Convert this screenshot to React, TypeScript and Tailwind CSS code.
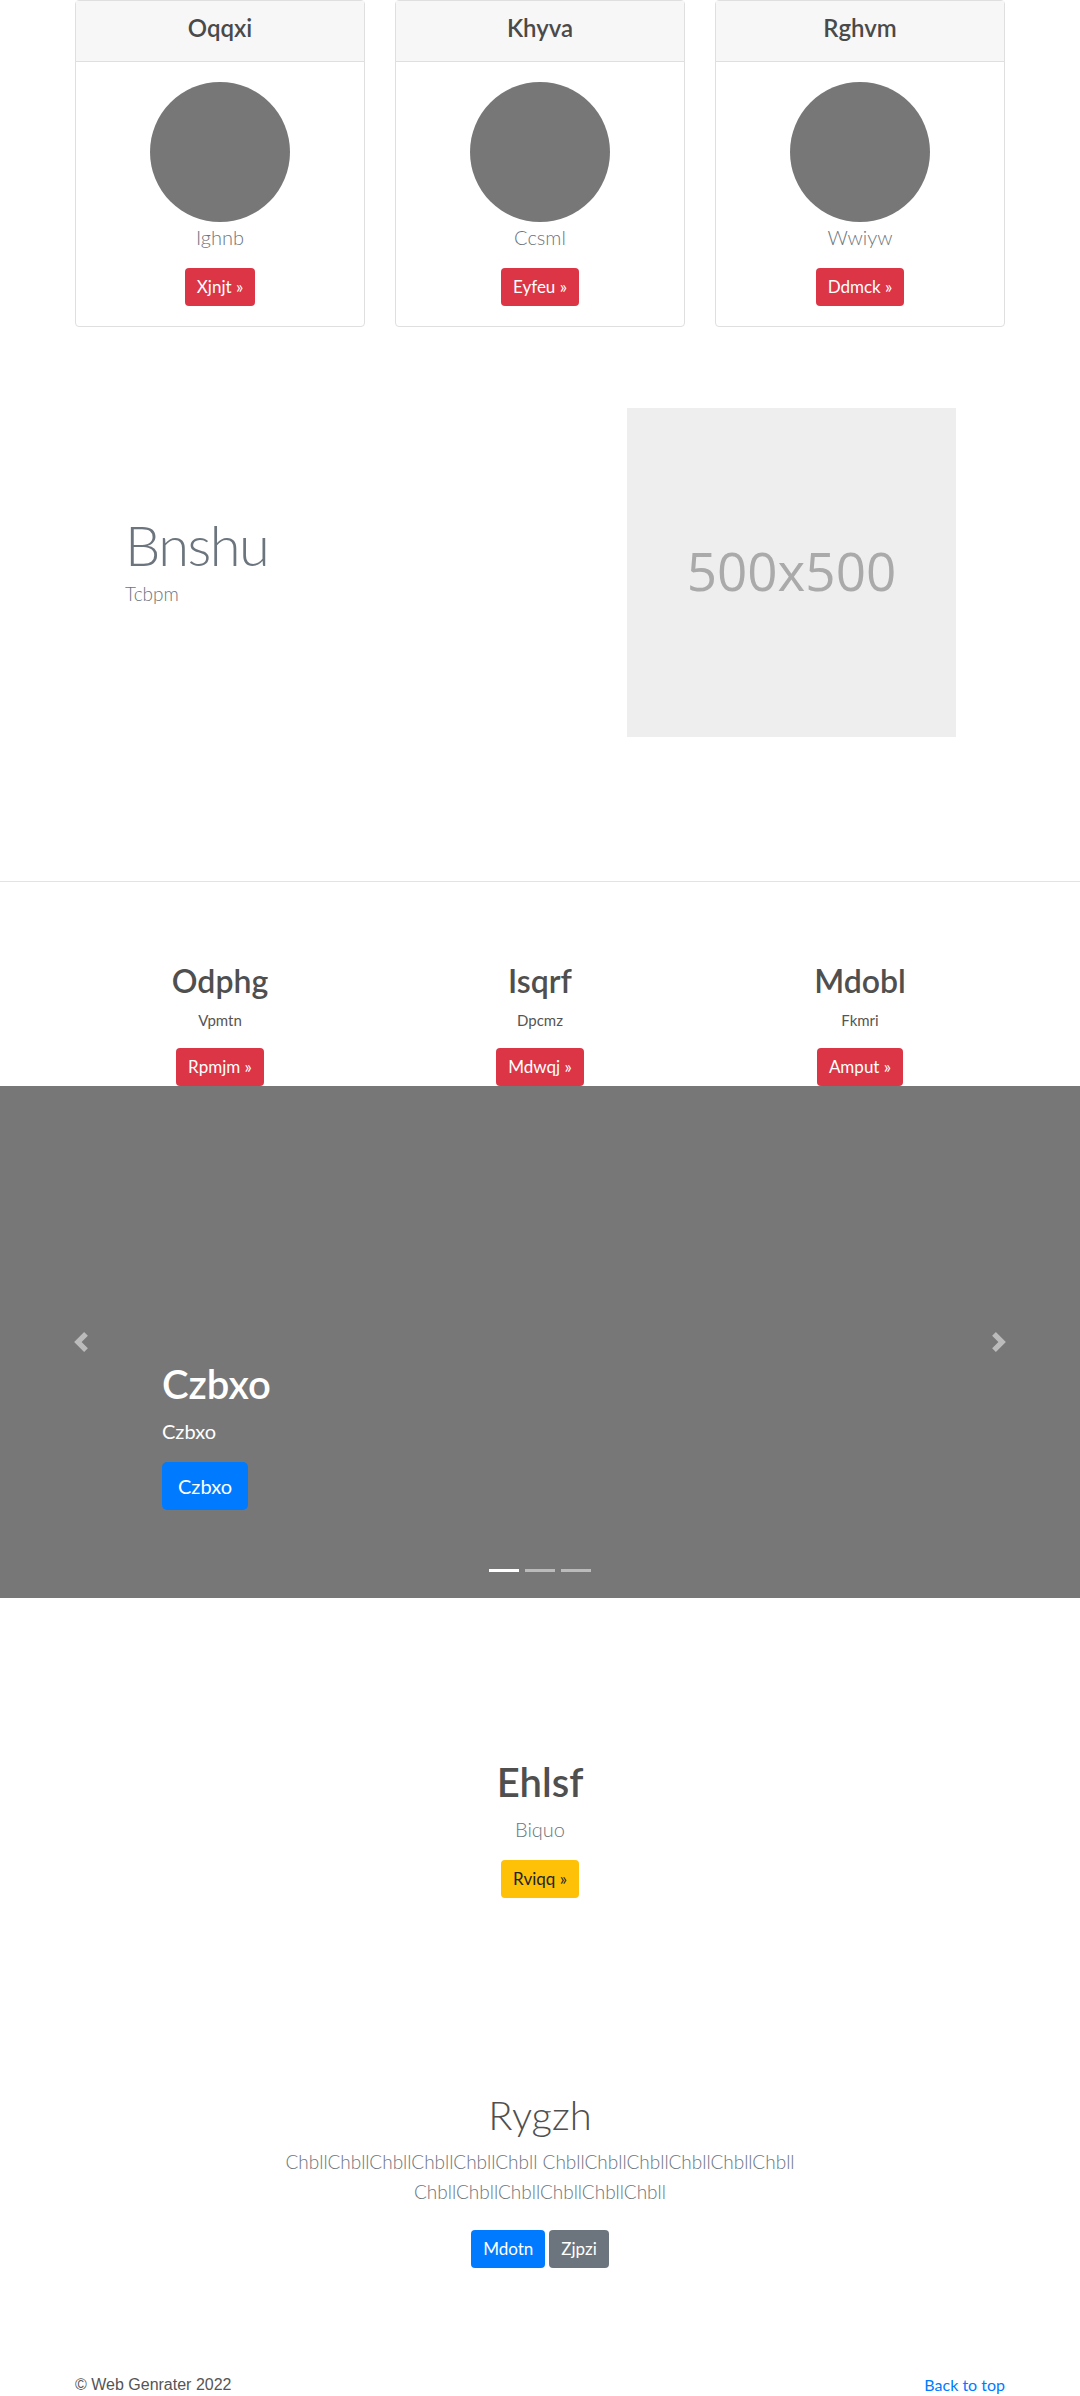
import React from "react";

const font = { fontFamily: '"Lato", "Noto Sans", sans-serif' };

const team = [
  { title: "Oqqxi", name: "Ighnb", cta: "Xjnjt »" },
  { title: "Khyva", name: "Ccsml", cta: "Eyfeu »" },
  { title: "Rghvm", name: "Wwiyw", cta: "Ddmck »" },
];

const features = [
  { title: "Odphg", text: "Vpmtn", cta: "Rpmjm »" },
  { title: "Isqrf", text: "Dpcmz", cta: "Mdwqj »" },
  { title: "Mdobl", text: "Fkmri", cta: "Amput »" },
];

function Chevron({ dir }: { dir: "prev" | "next" }) {
  const d =
    dir === "prev"
      ? "M5.25 0l-4 4 4 4 1.5-1.5L4.25 4l2.5-2.5L5.25 0z"
      : "M2.75 0l-1.5 1.5L3.75 4l-2.5 2.5L2.75 8l4-4-4-4z";
  return (
    <svg width="20" height="20" viewBox="0 0 8 8" className="opacity-50">
      <path d={d} fill="#fff" />
    </svg>
  );
}

export default function App() {
  return (
    <div className="bg-white text-[#212529]" style={font}>
      {/* team cards */}
      <section className="mx-auto w-[960px] px-[15px]">
        <div className="grid grid-cols-3 gap-[30px]">
          {team.map((t) => (
            <div key={t.title} className="rounded border border-[#dfdfdf] bg-white text-center">
              <div className="border-b border-[#dfdfdf] bg-[#f7f7f7] px-5 pt-3 pb-[11px]">
                <h4 className="mb-2 text-[24px] leading-[29px] font-semibold text-[#4a4a4a]">{t.title}</h4>
              </div>
              <div className="flex flex-col items-center p-5">
                <div className="h-[140px] w-[140px] rounded-full bg-[#777]" />
                <p className="mb-4 text-[20px] leading-[30px] font-light text-[#6c757d]">{t.name}</p>
                <button className="h-[38px] rounded bg-[#dc3545] px-3 text-[17px] text-white">{t.cta}</button>
              </div>
            </div>
          ))}
        </div>
      </section>

      {/* featurette */}
      <section className="mx-auto flex w-[960px] items-center px-[15px] pt-[81px] pb-[144px]">
        <div className="flex-1 pb-[26px] pl-[50px]">
          <h1 className="text-[56px] leading-[67px] font-light tracking-[-1.5px] text-[#6c757d]">Bnshu</h1>
          <p className="mt-[2px] text-[19px] leading-[28px] font-light text-[#6c757d]">Tcbpm</p>
        </div>
        <div className="mr-[49px] flex h-[329px] w-[329px] items-center justify-center bg-[#eeeeee]">
          <span className="pb-[4px] text-[53px] text-[#aaaaaa]" style={{ fontFamily: '"Open Sans", sans-serif' }}>
            500x500
          </span>
        </div>
      </section>

      <hr className="border-0 border-t border-[#e3e3e3]" />

      {/* three columns */}
      <section className="mx-auto w-[960px] px-[15px] pt-20">
        <div className="grid grid-cols-3 gap-[30px] text-center">
          {features.map((f) => (
            <div key={f.title} className="flex flex-col items-center">
              <h2 className="mb-2 text-[32px] leading-[38px] font-semibold text-[#4f4f4f]">{f.title}</h2>
              <p className="mb-4 text-[15px] leading-[24px] font-normal text-[#555]">{f.text}</p>
              <button className="h-[38px] rounded bg-[#dc3545] px-3 text-[17px] text-white">{f.cta}</button>
            </div>
          ))}
        </div>
      </section>

      {/* carousel */}
      <section className="relative h-[512px] bg-[#777777]">
        <div className="absolute top-0 left-0 flex h-full w-[15%] items-center justify-center">
          <Chevron dir="prev" />
        </div>
        <div className="absolute top-0 right-0 flex h-full w-[15%] items-center justify-center">
          <Chevron dir="next" />
        </div>
        <div className="absolute bottom-[88px] left-[162px] text-white">
          <h1 className="mb-2 text-[40px] leading-[48px] font-semibold">Czbxo</h1>
          <p className="mb-4 text-[20px] leading-[30px]">Czbxo</p>
          <button className="h-[48px] rounded-[5px] bg-[#007bff] px-4 text-[20px] text-white">Czbxo</button>
        </div>
        <div className="absolute bottom-[26px] left-0 flex w-full justify-center gap-[6px]">
          <span className="h-[3px] w-[30px] bg-white" />
          <span className="h-[3px] w-[30px] bg-white/50" />
          <span className="h-[3px] w-[30px] bg-white/50" />
        </div>
      </section>

      {/* callout */}
      <section className="flex flex-col items-center pt-[160px] text-center">
        <h1 className="mb-2 text-[40px] leading-[48px] font-semibold text-[#4f4f4f]">Ehlsf</h1>
        <p className="mb-4 text-[20px] leading-[30px] font-light text-[#6c757d]">Biquo</p>
        <button className="h-[38px] rounded bg-[#ffc107] px-3 text-[17px] text-[#212529]">Rviqq »</button>
      </section>

      {/* jumbotron */}
      <section className="mx-auto flex max-w-[640px] flex-col items-center pt-[193px] text-center">
        <h1 className="mb-2 text-[40px] leading-[48px] font-light text-[#4f4f4f]">Rygzh</h1>
        <p className="mb-[23px] text-[19px] leading-[30px] font-light text-[#6c757d]">
          ChbllChbllChbllChbllChbllChbll ChbllChbllChbllChbllChbllChbll ChbllChbllChbllChbllChbllChbll
        </p>
        <div className="flex gap-1">
          <button className="h-[38px] rounded bg-[#007bff] px-3 text-[17px] text-white">Mdotn</button>
          <button className="h-[38px] rounded bg-[#6c757d] px-3 text-[17px] text-white">Zjpzi</button>
        </div>
      </section>

      {/* footer */}
      <footer className="mx-auto flex w-[960px] justify-between px-[15px] pt-[105px] pb-8 text-[16px] leading-[24px]">
        <p className="text-[#555]" style={{ fontFamily: '"Liberation Sans", sans-serif' }}>
          © Web Genrater 2022
        </p>
        <a href="#" className="text-[#007bff]">
          Back to top
        </a>
      </footer>
    </div>
  );
}
